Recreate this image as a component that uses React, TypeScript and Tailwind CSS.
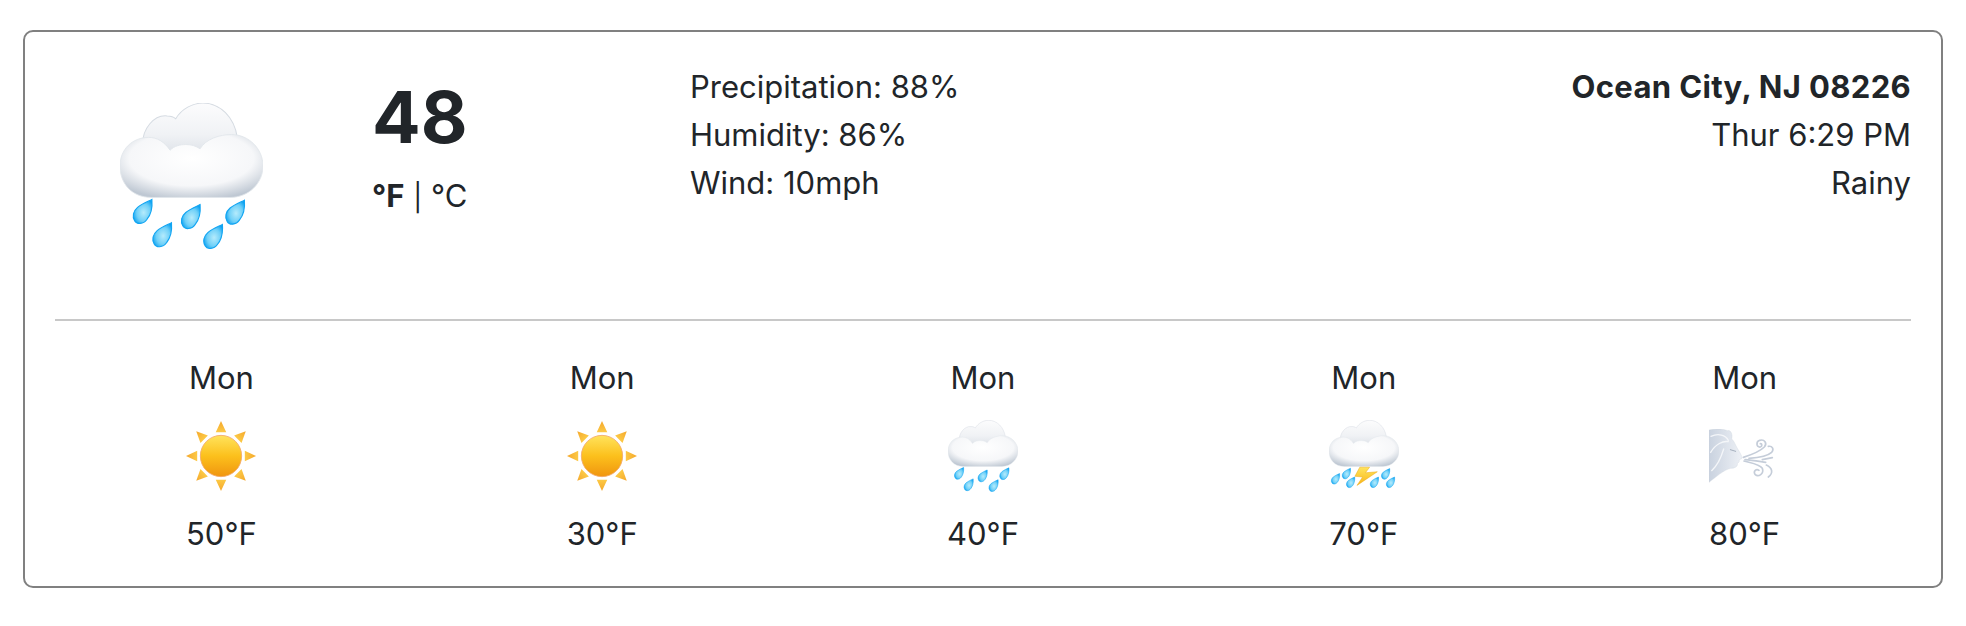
import type { ReactNode } from "react";

const Defs = () => (
  <svg width="0" height="0" className="absolute">
    <defs>
      <radialGradient id="cloudFront" cx="50%" cy="38%" r="66%">
        <stop offset="0%" stopColor="#ffffff" />
        <stop offset="66%" stopColor="#f6f7f9" />
        <stop offset="100%" stopColor="#bfc8d3" />
      </radialGradient>
      <linearGradient id="cloudBack" x1="0" y1="0" x2="0" y2="1">
        <stop offset="0%" stopColor="#fcfcfd" />
        <stop offset="55%" stopColor="#f0f2f5" />
        <stop offset="100%" stopColor="#d8dde4" />
      </linearGradient>
      <radialGradient id="dropFill" cx="55%" cy="55%" r="60%">
        <stop offset="0%" stopColor="#b5ebfc" />
        <stop offset="60%" stopColor="#6fd0f8" />
        <stop offset="100%" stopColor="#0ea2f1" />
      </radialGradient>
      <linearGradient id="sunFill" x1="0" y1="0" x2="0" y2="1">
        <stop offset="0%" stopColor="#ffe35c" />
        <stop offset="50%" stopColor="#fcc01c" />
        <stop offset="100%" stopColor="#f0950f" />
      </linearGradient>
      <linearGradient id="rayFill" x1="0" y1="0" x2="0" y2="1">
        <stop offset="0%" stopColor="#f5a82c" />
        <stop offset="100%" stopColor="#fcc945" />
      </linearGradient>
      <linearGradient id="boltFill" x1="0" y1="0" x2="0" y2="1">
        <stop offset="0%" stopColor="#ffe45c" />
        <stop offset="100%" stopColor="#f8b517" />
      </linearGradient>
      <linearGradient id="faceFill" x1="0" y1="0" x2="1" y2="0">
        <stop offset="0%" stopColor="#c9d2df" />
        <stop offset="100%" stopColor="#eef1f6" />
      </linearGradient>
    </defs>
  </svg>
);

// cloud drawn 100 wide, 66 tall
const Cloud = () => (
  <g>
    <path
      d="M16 30 C15 18 24 8 33 9 C36 9 38 10 39 11 C43 4 51 0 58 0 C70 0 80 10 82 24 L82 40 L16 40 Z"
      fill="url(#cloudBack)"
      stroke="#d5dbe2"
      strokeWidth="0.7"
    />
    <path
      d="M22 66 C8 66 0 56 0 44 C0 32 9 24 20 24 C26 24 31 27 35 33 C38 30 42 29 46 29 C50 29 53 30 56 32 C60 25 70 22 78 22 C90 22 100 32 100 44 C100 56 90 66 77 66 Z"
      fill="url(#cloudFront)"
      stroke="#e2e6eb"
      strokeWidth="0.6"
    />
  </g>
);

const Drop = ({ x, y, s = 1 }: { x: number; y: number; s?: number }) => (
  <path
    transform={`translate(${x} ${y}) scale(${s})`}
    d="M13 0 C13.5 6 12 11 9.5 14 C7 17.5 2.5 17.5 1 15 C-1 12 0 8 3 5.5 C6 3 10 1.5 13 0 Z"
    fill="url(#dropFill)"
    stroke="#12a5f2"
    strokeWidth="0.8"
  />
);

const RainIcon = ({ className }: { className: string }) => (
  <svg viewBox="0 0 100 102" className={className}>
    <Cloud />
    <Drop x={9.3} y={67.4} />
    <Drop x={43} y={71} />
    <Drop x={74} y={67.9} />
    <Drop x={23} y={83.7} />
    <Drop x={58.6} y={84.9} />
  </svg>
);

const StormIcon = ({ className }: { className: string }) => (
  <svg viewBox="0 0 100 102" className={className}>
    <Cloud />
    <Drop x={3.4} y={76} s={0.9} />
    <Drop x={19} y={68.5} s={0.9} />
    <Drop x={25} y={81} s={0.9} />
    <Drop x={59} y={81} s={0.9} />
    <Drop x={75} y={69} s={0.9} />
    <Drop x={82} y={81} s={0.9} />
    <path
      d="M44 67 L58 67 L52 75 L69 73.5 L40 93 L48 81 L37 80 Z"
      fill="url(#boltFill)"
      stroke="#eda815"
      strokeWidth="0.7"
    />
  </svg>
);

const SunIcon = ({ className }: { className: string }) => (
  <svg viewBox="0 0 100 100" className={className}>
    <circle cx="50" cy="50" r="29.5" fill="url(#sunFill)" stroke="#f2a96a" strokeWidth="1.2" />
    {[0, 45, 90, 135, 180, 225, 270, 315].map((a) => (
      <path
        key={a}
        transform={`rotate(${a} 50 50)`}
        d="M50 0 L57.5 16 L42.5 16 Z"
        fill="url(#rayFill)"
      />
    ))}
  </svg>
);

const WindIcon = ({ className }: { className: string }) => (
  <svg viewBox="0 0 216 162" className={className}>
    <path
      d="M0 3 C20 -2 45 0 55 5 C65 2 72 15 68 30 C75 35 80 50 85 58 C92 70 100 82 99 88 L90 93 C92 98 90 100 85 103 C87 112 78 118 65 118 C45 122 20 145 0 160 Z"
      fill="url(#faceFill)"
      stroke="#c9d1dc"
      strokeWidth="1"
    />
    <g fill="none" stroke="#f4f6f9" strokeWidth="4" strokeLinecap="round">
      <path d="M6 22 C28 12 50 18 58 34" />
      <path d="M5 70 C20 45 42 35 58 38" />
      <path d="M8 125 C25 110 38 80 44 60" />
    </g>
    <path d="M64 62 L80 67" stroke="#98a3b3" strokeWidth="2.5" strokeLinecap="round" fill="none" />
    <g fill="none" stroke="#c5cdd9" strokeWidth="5" strokeLinecap="round">
      <path d="M103 85 C125 78 150 70 166 54 C176 42 166 30 152 34 C140 38 142 56 154 54 C160 52 160 44 154 44" />
      <path d="M120 88 C145 86 175 82 188 70 C196 60 190 50 178 52" />
      <path d="M160 92 L190 86" />
      <path d="M108 92 C130 94 155 98 170 100" />
      <path d="M105 96 C125 102 150 105 160 118 C166 134 148 146 138 136 C132 126 142 118 150 124" />
      <path d="M172 108 C190 116 194 132 178 144" />
    </g>
  </svg>
);

const Forecast = ({ temp, children }: { temp: string; children: ReactNode }) => (
  <div className="flex flex-col items-center">
    <div className="leading-[48px]">Mon</div>
    <div className="h-[108px] flex items-center justify-center">{children}</div>
    <div className="leading-[48px]">{temp}</div>
  </div>
);

export default function App() {
  return (
    <div className="bg-white min-h-[626px] px-[23px] pt-[30px] font-['Inter','Liberation_Sans',sans-serif] text-[31px] text-[#212529]">
      <Defs />
      <div className="w-[1920px] h-[558px] border-2 border-[#808080] rounded-[10px] px-[30px] pt-[31px]">
        <div className="flex h-[258px] border-b-2 border-[#c8c8c8]">
          <div className="w-[317px] pl-[65px] pt-[40px]">
            <RainIcon className="w-[143px] h-[146px]" />
          </div>
          <div className="w-[318px]">
            <div className="mt-[11px] text-[72px] font-bold leading-[86px]">48</div>
            <div className="mt-[12px] leading-[48px]">
              <span className="font-bold">°F</span> <span className="text-[27px]">|</span> °C
            </div>
          </div>
          <div className="flex-1 leading-[48px]">
            <div>Precipitation: 88%</div>
            <div>Humidity: 86%</div>
            <div>Wind: 10mph</div>
          </div>
          <div className="text-right leading-[48px]">
            <div className="font-bold tracking-[0.35px]">Ocean City, NJ 08226</div>
            <div>Thur 6:29 PM</div>
            <div>Rainy</div>
          </div>
        </div>
        <div className="grid grid-cols-5 -mx-[24px] pt-[33px]">
          <Forecast temp="50°F">
            <SunIcon className="w-[70px] h-[70px]" />
          </Forecast>
          <Forecast temp="30°F">
            <SunIcon className="w-[70px] h-[70px]" />
          </Forecast>
          <Forecast temp="40°F">
            <RainIcon className="w-[70px] h-[72px]" />
          </Forecast>
          <Forecast temp="70°F">
            <StormIcon className="w-[70px] h-[72px]" />
          </Forecast>
          <Forecast temp="80°F">
            <WindIcon className="w-[72px] h-[54px]" />
          </Forecast>
        </div>
      </div>
    </div>
  );
}
